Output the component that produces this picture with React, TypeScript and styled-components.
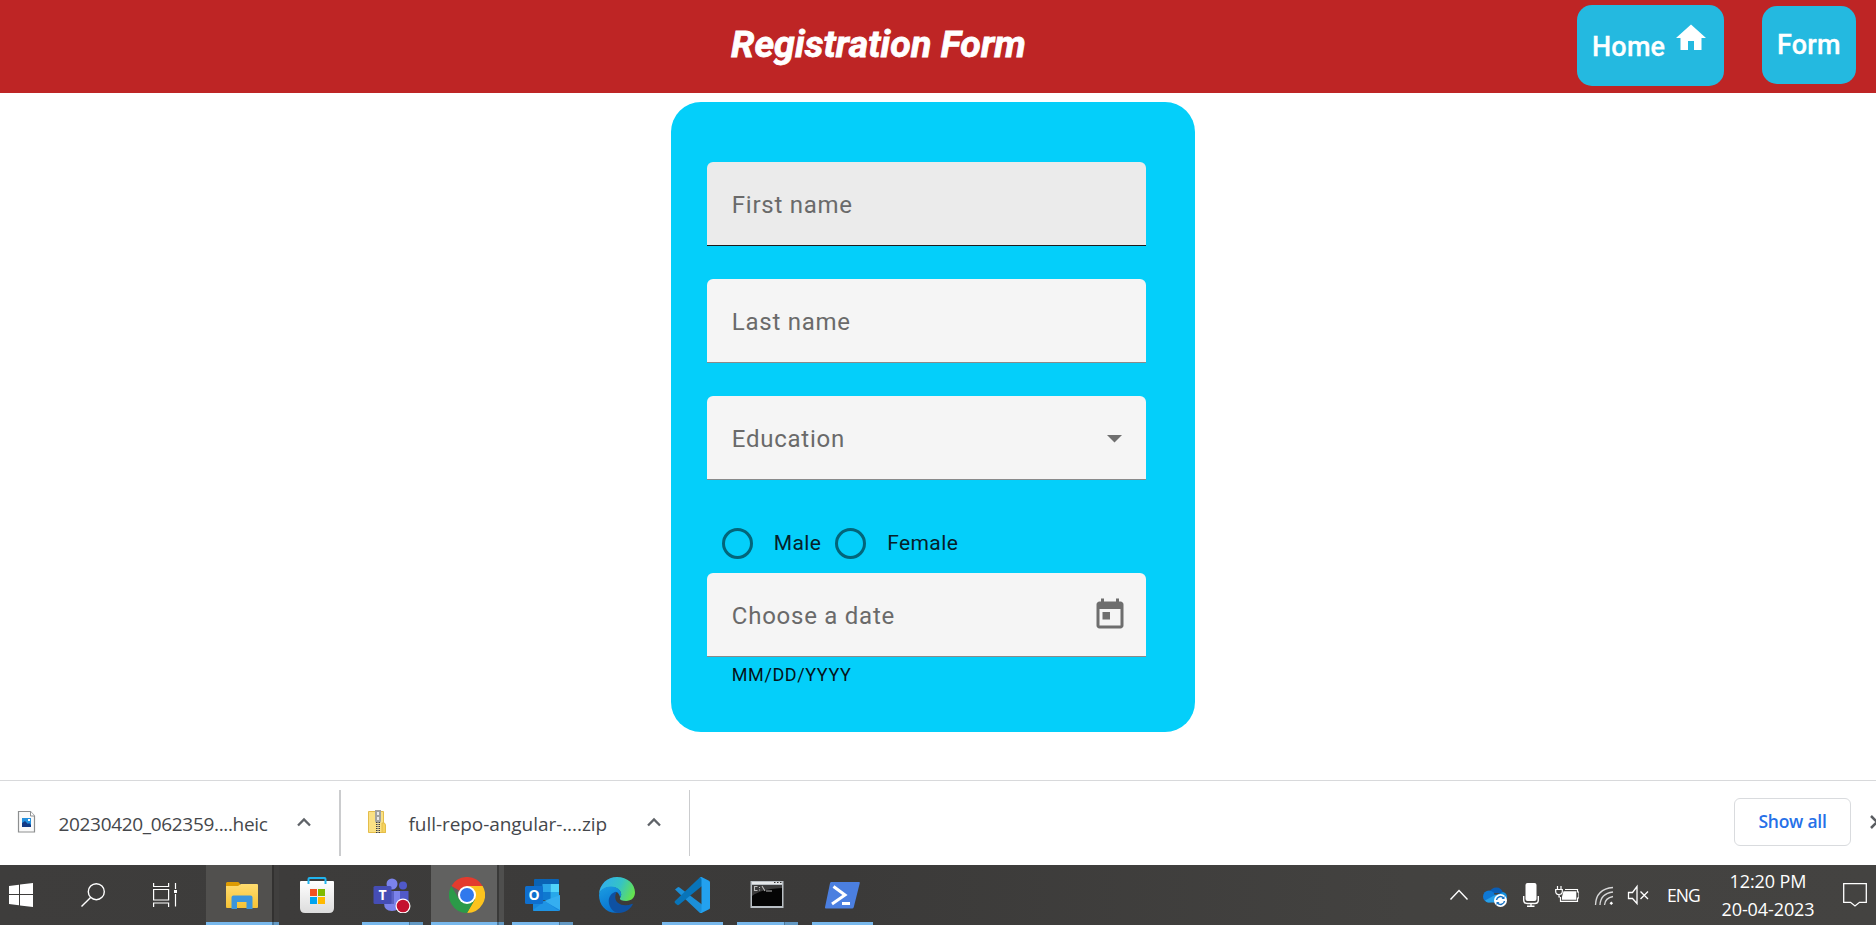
import React from 'react';
import styled, { createGlobalStyle, css } from 'styled-components';

const GlobalStyle = createGlobalStyle`
  * { box-sizing: border-box; }
  html, body { margin: 0; padding: 0; overflow: hidden; background: #fff; }
  svg { display: block; flex: none; }
`;

const Screen = styled.div`
  display: flex;
  flex-direction: column;
  width: 1876px;
  height: 925px;
  overflow: hidden;
  font-family: Roboto, sans-serif;
`;

/* ---------- page header ---------- */

const Header = styled.header`
  display: grid;
  grid-template-columns: 731px 1fr auto;
  height: 93px;
  flex: none;
  padding-right: 20px;
  background: #be2525;
`;

const Title = styled.h1`
  grid-column: 2;
  margin: 0;
  padding-top: 21px;
  font-size: 37.5px;
  line-height: 46px;
  font-weight: 700;
  font-style: italic;
  letter-spacing: 0.08px;
  -webkit-text-stroke: 0.8px #fff;
  color: #fff;
  white-space: nowrap;
`;

const Nav = styled.nav`
  display: flex;
  align-items: flex-start;
  gap: 38px;
`;

const NavButton = styled.a<{ $width: number; $height: number; $top: number }>`
  display: flex;
  align-items: center;
  width: ${(p) => p.$width}px;
  height: ${(p) => p.$height}px;
  margin-top: ${(p) => p.$top}px;
  padding-left: 15px;
  border-radius: 15px;
  background: #24b9e0;
  color: #fff;
  font-size: 27px;
  font-weight: 500;
  letter-spacing: 0.2px;
  -webkit-text-stroke: 0.3px #fff;
  white-space: nowrap;

  svg {
    margin: -16px 0 0 8px;
  }
`;

const NavText = styled.span<{ $drop?: number }>`
  padding-top: ${(p) => p.$drop ?? 0}px;
`;

/* ---------- form card ---------- */

const Main = styled.main`
  flex: 1;
  padding: 9px 0 0 671px;
`;

const Card = styled.form`
  display: flex;
  flex-direction: column;
  width: 524px;
  height: 630px;
  padding: 60px 49px 0 36px;
  border-radius: 30px;
  background: #04cffa;
`;

const Field = styled.div<{ $hovered?: boolean; $gap?: number; $endPad?: number }>`
  display: flex;
  align-items: center;
  justify-content: space-between;
  height: 84px;
  flex: none;
  margin-bottom: ${(p) => p.$gap ?? 0}px;
  padding: 3px ${(p) => p.$endPad ?? 21}px 0 24.8px;
  border-bottom: 1px solid ${(p) => (p.$hovered ? '#1c1c1c' : '#8a8a8a')};
  border-radius: 6px 6px 0 0;
  background: ${(p) => (p.$hovered ? '#ebebeb' : '#f5f5f5')};
  color: #6a6a6a;
`;

const FieldLabel = styled.label`
  font-size: 24px;
  line-height: 36px;
  letter-spacing: 0.75px;
`;

const RadioRow = styled.div`
  display: flex;
  align-items: center;
  gap: 14px;
  height: 60px;
  margin-top: 33px;
  padding-left: 15px;
`;

const RadioOption = styled.label`
  display: flex;
  align-items: center;
  gap: 20.8px;
  font-size: 21px;
  letter-spacing: 0.4px;
  color: #062129;
`;

const RadioCircle = styled.span`
  width: 31px;
  height: 31px;
  border: 3px solid #03657a;
  border-radius: 50%;
`;

const Hint = styled.div`
  padding: 5px 0 0 24.8px;
  font-size: 18px;
  line-height: 26px;
  letter-spacing: 0.6px;
  color: #04141a;
`;

/* ---------- browser download shelf ---------- */

const Shelf = styled.section`
  display: flex;
  height: 85px;
  flex: none;
  padding-top: 9px;
  border-top: 1px solid #d8d9db;
  background: #fff;
  font-family: 'Open Sans', 'Noto Sans', sans-serif;
`;

const Download = styled.div<{ $width: number; $inset: number; $divider: number }>`
  display: flex;
  width: ${(p) => p.$width}px;
  height: 66px;
  padding-left: ${(p) => p.$inset}px;
  border-right: ${(p) => p.$divider}px solid #cbccce;
`;

const FileIcon = styled.div`
  width: 41.5px;
  padding-top: 20px;
`;

const FileName = styled.div<{ $spacing: number }>`
  width: 238.5px;
  padding-top: 19px;
  font-size: 19px;
  line-height: 30px;
  letter-spacing: ${(p) => p.$spacing}px;
  color: #45474b;
  white-space: nowrap;
`;

const ShelfChevron = styled.div`
  padding-top: 27px;
`;

const ShelfActions = styled.div`
  display: flex;
  margin-left: auto;
  padding-top: 8px;
`;

const ShowAll = styled.button`
  width: 117px;
  height: 48px;
  margin-right: 19px;
  padding: 0 0 2px;
  border: 1px solid #d9dbde;
  border-radius: 6px;
  background: #fff;
  color: #2670e8;
  font-family: inherit;
  font-size: 17.5px;
  font-weight: 600;
  letter-spacing: -0.25px;
`;

const CloseSlot = styled.div`
  width: 6px;
  padding-top: 17px;
  overflow: hidden;
`;

/* ---------- taskbar ---------- */

const Taskbar = styled.footer`
  display: flex;
  height: 60px;
  flex: none;
  background: linear-gradient(90deg, #3e3d3c 0%, #3b3a39 45%, #434240 75%, #444341 100%);
  color: #fff;
  font-family: 'Open Sans', 'Noto Sans', sans-serif;
`;

const SystemButton = styled.div<{ $width: number; $end?: number }>`
  display: flex;
  justify-content: flex-end;
  align-items: center;
  width: ${(p) => p.$width}px;
  padding-right: ${(p) => p.$end ?? 24}px;
`;

type AppState = 'idle' | 'running' | 'open' | 'focused';

const stacked = css`
  background: linear-gradient(90deg, #78b8ec 0 77%, #4c7697 77% 79%, #6298c3 79%);
`;

const AppButton = styled.div<{ $state: AppState }>`
  display: flex;
  flex-direction: column;
  align-items: center;
  justify-content: space-between;
  width: 73px;
  margin-right: 2px;
  padding-top: 12px;

  svg {
    margin-right: 2px;
  }
  ${(p) =>
    p.$state === 'open' &&
    'background: linear-gradient(90deg, #51504e 0 66px, #323130 66px 68px, #403f3e 68px);'}
  ${(p) =>
    p.$state === 'focused' &&
    'background: linear-gradient(90deg, #616160 0 66px, #3a3a39 66px 68px, #4f4f4e 68px);'}
`;

const Indicator = styled.span<{ $state: AppState; $stacked: boolean }>`
  width: ${(p) => (p.$state === 'running' ? 61 : 73)}px;
  height: 3px;
  background: ${(p) => (p.$state === 'idle' ? 'transparent' : '#78b8ec')};
  ${(p) => p.$stacked && p.$state === 'running' && stacked}
  ${(p) =>
    p.$stacked &&
    p.$state !== 'running' &&
    'background: linear-gradient(90deg, #78b8ec 0 66px, #4c7697 66px 68px, #6298c3 68px);'}
`;

const Tray = styled.div`
  display: flex;
  align-items: center;
  gap: 12px;
  margin-left: auto;
`;

const Language = styled.div`
  width: 42px;
  margin-left: 4px;
  font-size: 17.5px;
  letter-spacing: -0.9px;
`;

const Clock = styled.div`
  display: flex;
  flex-direction: column;
  align-items: center;
  width: 94px;
  margin-right: 16px;
  padding-bottom: 1px;
  font-size: 18px;
  line-height: 28px;
  letter-spacing: -0.1px;
  white-space: nowrap;
`;

const ActionCenter = styled.div`
  width: 33px;
`;

/* ---------- icons ---------- */

const HomeIcon = () => (
  <svg width="36" height="36" viewBox="0 0 24 24" fill="#fff">
    <path d="M10 20v-6h4v6h5v-8h3L12 3 2 12h3v8z" />
  </svg>
);

const DropdownIcon = () => (
  <svg width="21" height="8" viewBox="0 0 21 8" fill="#6f6f6f">
    <path d="M3 0h15l-7.5 7.500z" />
  </svg>
);

const CalendarIcon = () => (
  <svg width="36" height="36" viewBox="0 0.7 24 24" fill="#6e6e6e">
    <path d="M19 3h-1V1h-2v2H8V1H6v2H5c-1.110 0-1.990.9-1.990 2L3 19c0 1.100.890 2 2 2h14c1.100 0 2-.9 2-2V5c0-1.100-.9-2-2-2zm0 16H5V8h14v11zM7 10h5v5H7z" />
  </svg>
);

const ImageFileIcon = () => (
  <svg width="19" height="24" viewBox="0 0 19 24">
    <path d="M1.500 1.500h12l4 4.500v16h-16z" fill="#fafafa" stroke="#8d8f90" strokeWidth="1.200" />
    <path d="M13.500 1.500V6h4" fill="#fff" stroke="#8d8f90" />
    <path d="M5 8h9v9H5z" fill="#2590dd" />
    <path d="M5 13l3-2 3 3 1-1 2 2v2H5z" fill="#123a86" />
    <path d="M11 9h2v2h-2z" fill="#fff" />
  </svg>
);

const ZipFileIcon = () => (
  <svg width="20" height="24" viewBox="0 0 20 24">
    <path d="M1.500 1.500h15v13l2 1v7h-17z" fill="#fae184" stroke="#e4bd4a" />
    <path d="M15 13h2.500l1 2v7.500H15z" fill="#f6d35e" stroke="#e4bd4a" />
    <path d="M8 0h6v11l-1 2H9l-1-2z" fill="#a2a39f" />
    <path d="M10 2h2v3h-2zM10 7h2v3h-2z" fill="#e9e9e9" />
    <path d="M11 12v11" stroke="#3d3d3a" strokeWidth="4" strokeDasharray="1 1" />
    <path d="M11 12v11" stroke="#d9d4be" strokeWidth="1" />
  </svg>
);

const ChevronUp = () => (
  <svg width="14" height="10" viewBox="0 0 14 10" fill="none" stroke="#5f6368" strokeWidth="2.300">
    <path d="M1 8.500l6-6 6 6" />
  </svg>
);

const CloseIcon = () => (
  <svg width="14" height="14" viewBox="0 0 14 14" stroke="#5a5d61" strokeWidth="2.500">
    <path d="M1 1l12 12M13 1L1 13" />
  </svg>
);

const WindowsIcon = () => (
  <svg width="24" height="24" viewBox="0 0 24 24" fill="#fff">
    <path d="M0 3l10-1.300V11H0zM11 1.600L24 0v11H11zM0 12h10v10.300L0 21zM11 12h13v12l-13-1.600z" />
  </svg>
);

const SearchIcon = () => (
  <svg width="24" height="24" viewBox="0 0 24 24" fill="none" stroke="#fff" strokeWidth="1.400">
    <circle cx="15.300" cy="8.700" r="8" />
    <path d="M9.600 14.400L.5 23.500" />
  </svg>
);

const TaskViewIcon = () => (
  <svg width="24" height="24" viewBox="0 0 24 24" fill="none" stroke="#fff" strokeWidth="1.200">
    <path d="M.6 0v3.500h15V0M.6 6.500h15v10.500H.6zM.6 24v-4h15v4M22.500 0v6M22.500 11v12.500" />
    <path d="M21 7h3v3h-3z" fill="#fff" stroke="none" />
  </svg>
);

const ExplorerIcon = () => (
  <svg width="36" height="36" viewBox="0 0 36 36">
    <defs>
      <linearGradient id="folder" x1="0" y1="0" x2="0" y2="1">
        <stop offset="0" stopColor="#ffdc70" />
        <stop offset="1" stopColor="#f5c235" />
      </linearGradient>
    </defs>
    <path d="M3 5h11q1 0 2 2l1 4H2V6z" fill="#dd9b02" />
    <path d="M2 9h12l3-2h16q1 0 1 1v22q0 1-1 1H3q-1 0-1-1z" fill="url(#folder)" />
    <path d="M9.500 18.500h17q2 0 2 2V32h-6v-7H13v7H7.500V20.500q0-2 2-2z" fill="#3b95dd" />
  </svg>
);

const StoreIcon = () => (
  <svg width="36" height="36" viewBox="0 0 36 36">
    <defs>
      <linearGradient id="bag" x1="0" y1="0" x2="0" y2="1">
        <stop offset="0" stopColor="#fff" />
        <stop offset="1" stopColor="#dcdcdc" />
      </linearGradient>
    </defs>
    <path d="M1 5q0-1 1-1h32q1 0 1 1v26q0 5-5 5H6q-5 0-5-5z" fill="url(#bag)" />
    <path d="M9.500 7V2q0-1 1-1h15q1 0 1 1v5" fill="none" stroke="#20b4ee" strokeWidth="2" />
    <path d="M11 12h7v7h-7z" fill="#f25022" />
    <path d="M19 12h7v7h-7z" fill="#7fba00" />
    <path d="M11 20h7v7h-7z" fill="#00a4ef" />
    <path d="M19 20h7v7h-7z" fill="#ffb900" />
  </svg>
);

const LogoLetter = styled.text`
  font-family: 'Open Sans', sans-serif;
  font-weight: 700;
  font-size: 14px;
  fill: #fff;
  text-anchor: middle;
`;

const TeamsIcon = () => (
  <svg width="38" height="36" viewBox="0 0 38 36">
    <circle cx="30" cy="8.500" r="4" fill="#5059c9" />
    <path d="M25 14h10.500v11q0 4-5 4H25z" fill="#5059c9" />
    <circle cx="19" cy="7" r="5.500" fill="#7b83eb" />
    <path d="M11 14h16v12q0 8-8 8t-8-8z" fill="#7b83eb" />
    <path d="M11 14h10v13H11z" fill="#5a62c4" />
    <rect x=".5" y="9" width="18" height="18" rx="1.500" fill="#454db5" />
    <LogoLetter x="9.500" y="23">T</LogoLetter>
    <circle cx="30" cy="29" r="7.500" fill="#fff" />
    <circle cx="30" cy="29" r="6.300" fill="#c4112f" />
  </svg>
);

const ChromeIcon = () => (
  <svg width="36" height="36" viewBox="0 0 36 36">
    <path d="M18 18L2.400 9A18 18 0 0 1 33.600 9z" fill="#e33b2e" />
    <path d="M18 9h15.600A18 18 0 0 1 18 36l7.800-13.500z" fill="#fcc31e" />
    <path d="M25.800 22.500L18 36A18 18 0 0 1 2.400 9l7.800 13.500z" fill="#2b9a48" />
    <circle cx="18" cy="18" r="9" fill="#fff" />
    <circle cx="18" cy="18" r="7" fill="#3079ed" />
  </svg>
);

const OutlookIcon = () => (
  <svg width="36" height="36" viewBox="0 0 36 36">
    <path d="M11 2h23q1 0 1 1v19H10V3q0-1 1-1z" fill="#0a63b5" />
    <path d="M18.500 7h8v8h-8z" fill="#2aa5e8" />
    <path d="M26.500 7H35v8h-8.500z" fill="#50d3fa" />
    <path d="M10 15h8.500v8H10z" fill="#0a52a0" />
    <path d="M18.500 15h8v8h-8z" fill="#0f79d0" />
    <path d="M26.500 15H35v8h-8.500z" fill="#28a8ea" />
    <path d="M36 18v15q0 1-1 1H10q-1 0-1-1V20l14 5z" fill="#1687dc" />
    <path d="M36 18v15L20 24z" fill="#35aef0" />
    <path d="M9 33l12-9 14 10H10z" fill="#1f94e4" />
    <rect x="1" y="9" width="18" height="18" rx="1.500" fill="#0f6fce" />
    <LogoLetter x="10" y="23">O</LogoLetter>
  </svg>
);

const EdgeIcon = () => (
  <svg width="36" height="36" viewBox="0 0 24 24">
    <defs>
      <linearGradient id="edgeTop" x1="0" y1=".3" x2="1" y2=".6">
        <stop offset="0" stopColor="#31aef0" />
        <stop offset=".55" stopColor="#35c3c5" />
        <stop offset="1" stopColor="#66e34c" />
      </linearGradient>
      <linearGradient id="edgeLeft" x1="0" y1="0" x2=".4" y2="1">
        <stop offset="0" stopColor="#1b9de2" />
        <stop offset="1" stopColor="#0873d0" />
      </linearGradient>
    </defs>
    <path d="M0 11.500C.4 4.800 5.500 0 12 0c7 0 12 4.600 12 10.400 0 3.500-2.600 5.600-5.900 5.600-2.700 0-4.200-.9-4.200-1.700 0-.6.9-1 .9-2.700 0-2.700-3-4.900-6.700-4.900C4 6.700 1 9 0 11.500z" fill="url(#edgeTop)" />
    <path d="M0 12c.5-3.600 4-5.600 8.100-5.600 3.200 0 6.700 2 6.700 5.100 0 .8-.3 1.500-.7 2-.6-2.400-2-3.500-2.500-3.500-1.500.6-3.800 2.800-3.800 6 0 3.700 3 6.700 6.400 7.500C6 25.500 0 19.500 0 12z" fill="url(#edgeLeft)" />
    <path d="M11.300 9.900C8.500 10.500 6.500 13 6.500 16c0 4 3 8 6.700 8 4.300 0 7.700-2.700 9.200-5.500.3-.5-.1-.8-.6-.5-5.300 2.300-11.700-.2-10.900-5.500.1-1 .5-1.700.9-2.200z" fill="#0e51a3" />
  </svg>
);

const VsCodeIcon = () => (
  <svg width="36" height="36" viewBox="0 0 36 36">
    <path d="M1 12.500l2.500-2q1-.8 2 0L28 27.500V36h-2z" fill="#1b8fd8" />
    <path d="M1 24q-1 1 0 2l2 1.800q1 .7 2 0L28 9V0l-2 .2z" fill="#0874b9" />
    <path d="M26 .3q1-.5 2 0l7 3.400q1 .6 1 1.600v25.400q0 1-1 1.600l-7 3.400q-1 .5-2 0 1.500-.5 1.500-2.500V2.500Q27.500.7 26 .3z" fill="#23a1ef" />
  </svg>
);

const TerminalIcon = () => (
  <svg width="36" height="36" viewBox="0 0 36 36">
    <rect x="1.500" y="4" width="33" height="27" fill="#b9bfc4" />
    <path d="M3 5h30v2H3z" fill="#e6e8ea" />
    <path d="M25 5h1.500v1H25zM28 5h1.500v1H28zM31 5h1.500v1H31z" fill="#333" />
    <path d="M3 8h30v21H3z" fill="#050505" />
    <path d="M3 8h30v3Q12 12 3 19z" fill="#3c3c3c" />
    <path d="M8.500 9.500H5.500v4h3M10.500 10v1M10.500 12.500v1M13 9l3 5M17 14h6" fill="none" stroke="#bbb" strokeWidth="1.100" />
  </svg>
);

const PowerShellIcon = () => (
  <svg width="36" height="36" viewBox="0 0 36 36">
    <path d="M7.500 5H35q1 0 .8 1l-6 24q-.3 1.500-1.800 1.500H2q-1.300 0-1-1.300L6 6.300Q6.300 5 7.500 5z" fill="#4b7fe0" />
    <path d="M9.500 9.500L21 18 8 27M18 26.500h8" fill="none" stroke="#fff" strokeWidth="3" />
  </svg>
);

const TrayChevron = () => (
  <svg width="24" height="24" viewBox="0 0 24 24" fill="none" stroke="#fff" strokeWidth="1.400">
    <path d="M3.500 16.500l8.500-9 8.500 9" />
  </svg>
);

const OneDriveIcon = () => (
  <svg width="24" height="24" viewBox="0 0 24 24">
    <path d="M6 10q2-5.500 7.500-5.500 5 0 6.500 5.500z" fill="#0a5db5" />
    <path d="M20 9q4 1 4 5t-5 5l-8-6z" fill="#1490df" />
    <circle cx="6" cy="13.500" r="6" fill="#0f78d4" />
    <path d="M5 19.500h14V15l-6-3.500-11 6q1.500 2 3 2z" fill="#28a0e8" />
    <circle cx="17.500" cy="17.500" r="6.500" fill="#fff" />
    <path d="M13.500 17a4 4 0 0 1 7-2M21.500 18a4 4 0 0 1-7 2" fill="none" stroke="#1673c5" strokeWidth="1.500" />
    <path d="M21.500 13v3h-3zM13.500 22v-3h3z" fill="#1673c5" />
  </svg>
);

const MicIcon = () => (
  <svg width="24" height="24" viewBox="0 0 24 24" fill="none" stroke="#fff" strokeWidth="1.400">
    <rect x="6.500" y="0" width="11" height="18" rx="2" fill="#fff" stroke="none" />
    <path d="M4.700 13v4q0 3.500 3.500 3.500h7.600q3.500 0 3.500-3.500v-4M12 20.500v3M8 23.300h7.500" />
  </svg>
);

const BatteryIcon = () => (
  <svg width="24" height="24" viewBox="0 0 24 24" fill="none" stroke="#fff" strokeWidth="1.200">
    <path d="M2.500 3v3M6 3v3M.7 6.500h6.600v2q0 3-3.300 3t-3.300-3zM4 11.500v2.500h1M10 6.500h12.500v2.500H24v6h-1.500v3.400H5.500V14" />
    <path d="M8.500 8.300h12.800v8.400H7v-3z" fill="#fff" stroke="none" />
  </svg>
);

const WifiIcon = () => (
  <svg width="24" height="24" viewBox="0 0 24 24" fill="none" stroke="#d8d8d8" strokeWidth="1.300">
    <path d="M4.500 22Q5 6 22 4.500M9 22Q9.500 10.500 22 9M13.500 22Q14 15 22 13.500" />
    <path d="M20.300 18.500l1.800 1.800-1.800 1.800-1.800-1.800z" fill="#fff" stroke="none" />
  </svg>
);

const MutedIcon = () => (
  <svg width="24" height="24" viewBox="0 0 24 24" fill="none" stroke="#fff" strokeWidth="1.300">
    <path d="M1.500 9.500h4l4.500-6v17l-4.500-5h-4zM13.500 8.500l7.500 7.500M21 8.500L13.500 16" />
  </svg>
);

const NotificationIcon = () => (
  <svg width="24" height="24" viewBox="0 0 24 24" fill="none" stroke="#fff" strokeWidth="1.300">
    <path d="M.7.700h22.600v18.600h-6.800L12 23l-4.500-3.700H.7z" />
  </svg>
);

const apps: { name: string; icon: React.ReactNode; state: AppState; stacked?: boolean }[] = [
  { name: 'explorer', icon: <ExplorerIcon />, state: 'open', stacked: true },
  { name: 'store', icon: <StoreIcon />, state: 'idle' },
  { name: 'teams', icon: <TeamsIcon />, state: 'running', stacked: true },
  { name: 'chrome', icon: <ChromeIcon />, state: 'focused', stacked: true },
  { name: 'outlook', icon: <OutlookIcon />, state: 'running', stacked: true },
  { name: 'edge', icon: <EdgeIcon />, state: 'idle' },
  { name: 'vscode', icon: <VsCodeIcon />, state: 'running' },
  { name: 'terminal', icon: <TerminalIcon />, state: 'running', stacked: true },
  { name: 'powershell', icon: <PowerShellIcon />, state: 'running' },
];

export default function App() {
  return (
    <Screen>
      <GlobalStyle />
      <Header>
        <Title>Registration Form</Title>
        <Nav>
          <NavButton $width={147} $height={81} $top={5}>
            <NavText $drop={2}>Home</NavText>
            <HomeIcon />
          </NavButton>
          <NavButton $width={94} $height={78} $top={6}>
            <NavText>Form</NavText>
          </NavButton>
        </Nav>
      </Header>

      <Main>
        <Card>
          <Field $hovered $gap={33}>
            <FieldLabel>First name</FieldLabel>
          </Field>
          <Field $gap={33}>
            <FieldLabel>Last name</FieldLabel>
          </Field>
          <Field>
            <FieldLabel>Education</FieldLabel>
            <DropdownIcon />
          </Field>
          <RadioRow>
            <RadioOption>
              <RadioCircle />
              Male
            </RadioOption>
            <RadioOption>
              <RadioCircle />
              Female
            </RadioOption>
          </RadioRow>
          <Field $endPad={17.6}>
            <FieldLabel>Choose a date</FieldLabel>
            <CalendarIcon />
          </Field>
          <Hint>MM/DD/YYYY</Hint>
        </Card>
      </Main>

      <Shelf>
        <Download $width={341} $inset={17} $divider={2}>
          <FileIcon>
            <ImageFileIcon />
          </FileIcon>
          <FileName $spacing={-0.33}>20230420_062359....heic</FileName>
          <ShelfChevron>
            <ChevronUp />
          </ShelfChevron>
        </Download>
        <Download $width={349} $inset={26} $divider={1}>
          <FileIcon>
            <ZipFileIcon />
          </FileIcon>
          <FileName $spacing={-0.06}>full-repo-angular-....zip</FileName>
          <ShelfChevron>
            <ChevronUp />
          </ShelfChevron>
        </Download>
        <ShelfActions>
          <ShowAll type="button">Show all</ShowAll>
          <CloseSlot>
            <CloseIcon />
          </CloseSlot>
        </ShelfActions>
      </Shelf>

      <Taskbar>
        <SystemButton $width={57}>
          <WindowsIcon />
        </SystemButton>
        <SystemButton $width={72}>
          <SearchIcon />
        </SystemButton>
        <SystemButton $width={77} $end={29}>
          <TaskViewIcon />
        </SystemButton>
        {apps.map((app) => (
          <AppButton key={app.name} $state={app.state}>
            {app.icon}
            <Indicator $state={app.state} $stacked={!!app.stacked} />
          </AppButton>
        ))}
        <Tray>
          <TrayChevron />
          <OneDriveIcon />
          <MicIcon />
          <BatteryIcon />
          <WifiIcon />
          <MutedIcon />
          <Language>ENG</Language>
          <Clock>
            <span>12:20 PM</span>
            <span>20-04-2023</span>
          </Clock>
          <ActionCenter>
            <NotificationIcon />
          </ActionCenter>
        </Tray>
      </Taskbar>
    </Screen>
  );
}
